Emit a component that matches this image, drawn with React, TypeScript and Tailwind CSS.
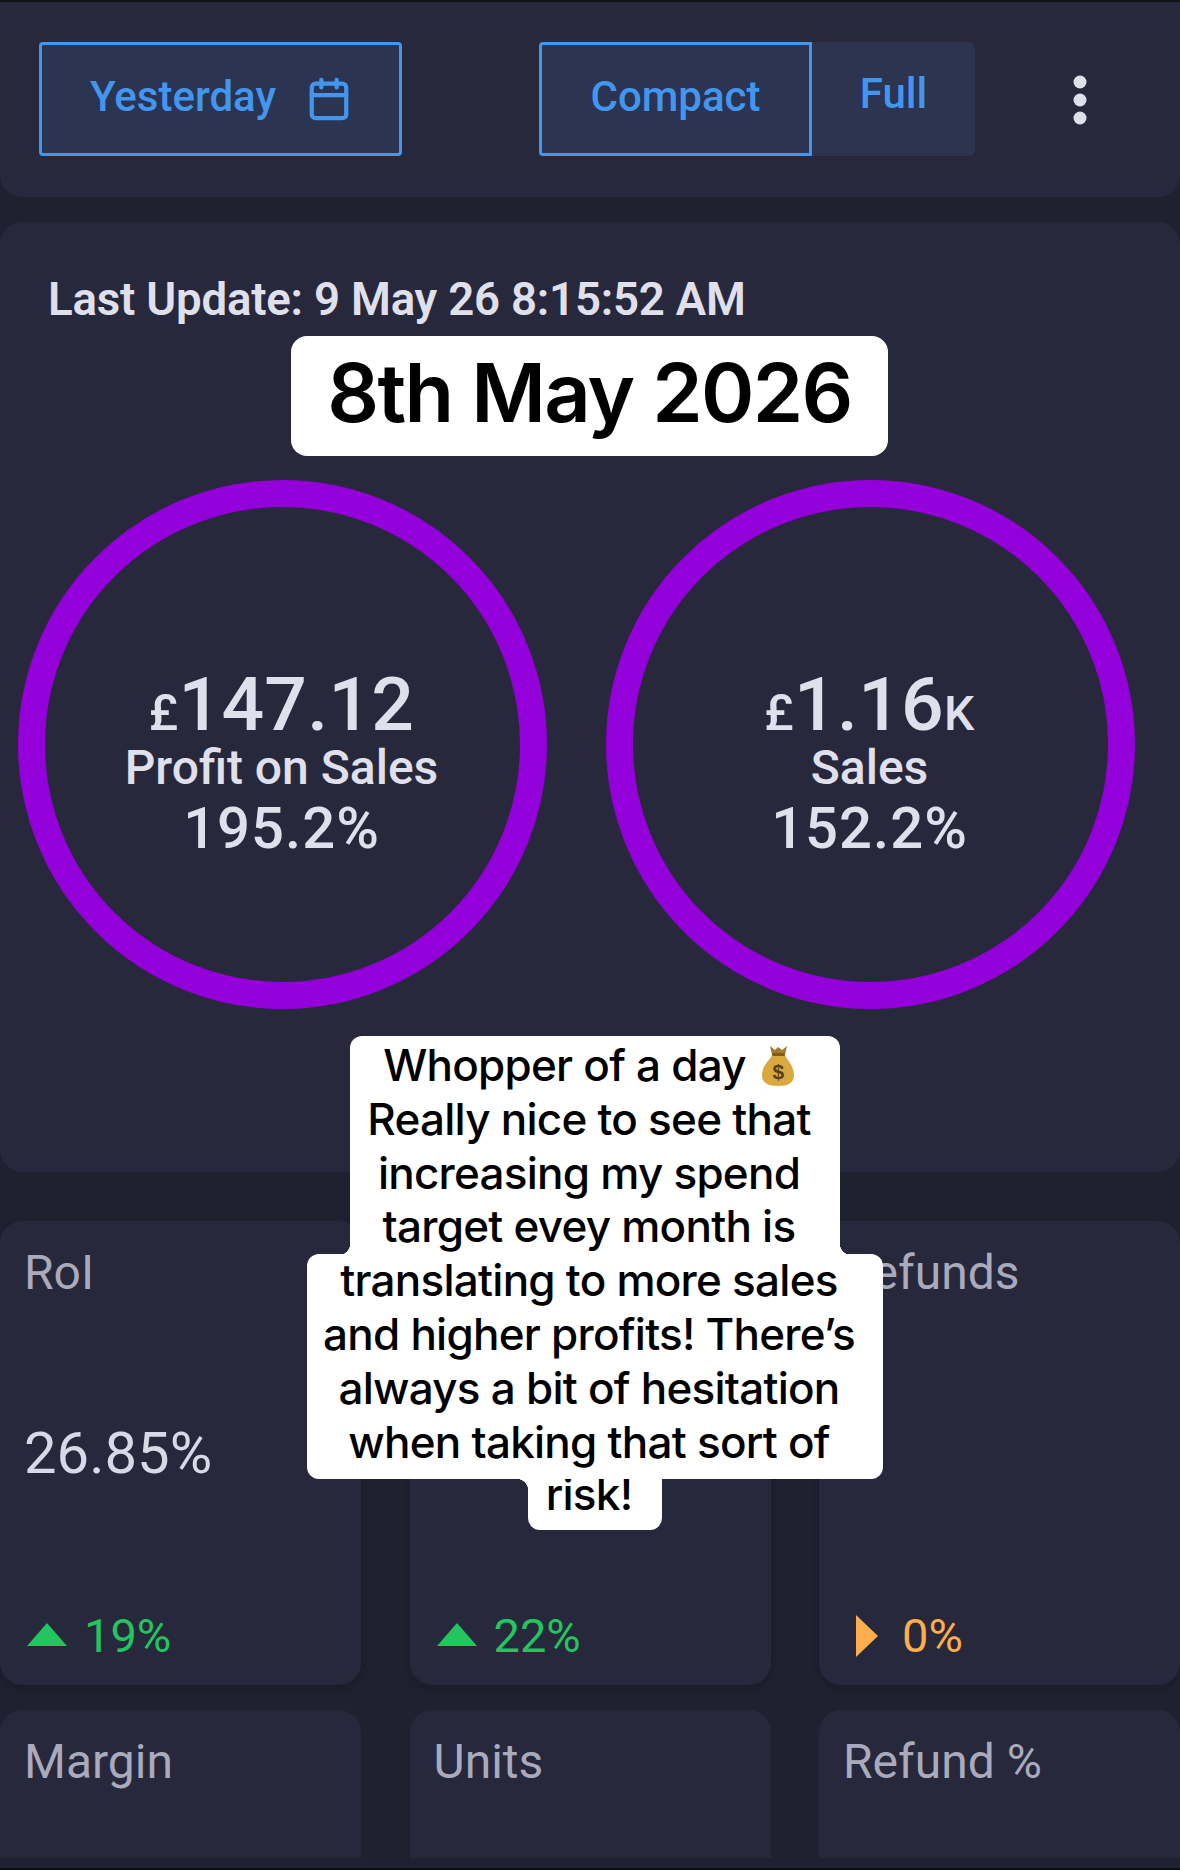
import { Calendar } from 'lucide-react';

const font = "font-['Roboto',sans-serif]";
const captionFont = "font-['Inter',sans-serif]";

function MoneyBag() {
  return (
    <svg width="34" height="42" viewBox="0 0 34 42" className="inline-block ml-[15px] align-[-6px]">
      <path d="M9 1 L14 5 L17 2 L21 5 L26 1 L24 10 L11 10 Z" fill="#a5792c" />
      <path d="M11 10 H24 C25 14 33 20 33 30 C33 38 27 41 17 41 C7 41 1 38 1 30 C1 20 10 14 11 10 Z" fill="#d9a83f" />
      <rect x="11" y="8" width="13" height="3" rx="1.5" fill="#7d5a1e" />
      <text x="17" y="34" textAnchor="middle" fontSize="21" fontWeight="700" fill="#54401a" fontFamily="Liberation Sans, sans-serif">$</text>
    </svg>
  );
}

function Ring({ currency, value, suffix, label, pct }: { currency: string; value: string; suffix?: string; label: string; pct: string }) {
  return (
    <div className="w-[529px] h-[529px] shrink-0 rounded-full border-[27px] border-[#9400d9] flex flex-col items-center justify-center text-[#e0e0ec] pt-[41px] pr-[2px]">
      <div className="flex items-baseline leading-none h-[70px] tracking-[0.3px]">
        <span className="text-[50px] font-medium">{currency}</span>
        <span className="text-[75px] font-medium">{value}</span>
        {suffix && <span className="text-[48px] font-medium">{suffix}</span>}
      </div>
      <div className="text-[48px] font-medium leading-[54px] mt-[4px] h-[52px]">{label}</div>
      <div className="text-[58px] font-medium leading-[70px] tracking-[1px]">{pct}</div>
    </div>
  );
}

function Stat({ label, value, delta, kind }: { label?: string; value?: string; delta: string; kind: 'up' | 'flat' }) {
  return (
    <div className="w-[361px] h-[464px] bg-[#27283c] rounded-[22px] pl-[24px] flex flex-col shadow-[0_4px_10px_rgba(0,0,0,0.12)]">
      <div className="text-[48px] leading-[54px] h-[54px] mt-[25px] text-[#a9abbd]">{label}</div>
      <div className="text-[58px] leading-[66px] mt-[120px] h-[66px] text-[#d8d9e6]">{value}</div>
      <div className="flex items-center mt-[123px]">
        {kind === 'up' ? (
          <svg width="40" height="24" viewBox="0 0 40 24" className="ml-[3px] mt-[-4px]">
            <path d="M20 1 L40 24 H0 Z" fill="#22c55e" />
          </svg>
        ) : (
          <svg width="22" height="42" viewBox="0 0 22 42" className="ml-[13px]">
            <path d="M0 0 L22 21 L0 42 Z" fill="#fbae4b" />
          </svg>
        )}
        <span className={`text-[47px] leading-[54px] ${kind === 'up' ? 'ml-[17px] text-[#22c55e]' : 'ml-[24px] text-[#fbae4b]'}`}>{delta}</span>
      </div>
    </div>
  );
}

function SmallCard({ label }: { label: string }) {
  return (
    <div className="w-[361px] h-[148px] bg-[#27283c] rounded-t-[22px] pl-[24px]">
      <div className="text-[48px] leading-[54px] mt-[25px] text-[#a9abbd]">{label}</div>
    </div>
  );
}

// inverted corners where the caption's line boxes meet
function Fillet({ className }: { className: string }) {
  return <div className={`absolute w-[12px] h-[12px] ${className}`} />;
}

export default function App() {
  return (
    <div className={`relative w-[1180px] h-[1870px] overflow-hidden bg-[#1f2030] ${font}`}>
      <div className="h-[2px] bg-[#11121c]" />

      <div className="h-[195px] bg-[#27283c] rounded-b-[22px] flex items-start pt-[40px] pl-[39px]">
        <button className="w-[363px] h-[114px] rounded-[4px] border-[3px] border-[#4396ee] bg-[#2b3450] flex items-center text-[#4396ee] text-[42px] font-medium pl-[48px] pb-[6px]">
          Yesterday
          <Calendar size={46} strokeWidth={2.2} className="ml-[30px] mt-[6px]" />
        </button>
        <div className="ml-[137px] flex h-[114px]">
          <button className="w-[273px] rounded-l-[4px] border-[3px] border-[#4396ee] bg-[#2b3450] flex items-center justify-center text-[#4396ee] text-[42px] font-medium pb-[6px]">
            Compact
          </button>
          <button className="w-[163px] rounded-r-[6px] bg-[#2c3450] flex justify-center pt-[27px] text-[#4396ee] text-[42px] font-medium leading-[50px]">
            Full
          </button>
        </div>
        <svg width="20" height="50" viewBox="0 0 20 50" className="ml-[95px] mt-[33px]">
          <circle cx="10" cy="7" r="6.5" fill="#e0e0ec" />
          <circle cx="10" cy="25" r="6.5" fill="#e0e0ec" />
          <circle cx="10" cy="43" r="6.5" fill="#e0e0ec" />
        </svg>
      </div>

      <div className="mt-[25px] h-[950px] bg-[#27283c] rounded-[22px] pt-[53px]">
        <div className="pl-[48px] text-[45.6px] font-semibold leading-[50px] text-[#e0e0ec] tracking-[-0.2px]">Last Update: 9 May 26 8:15:52 AM</div>
        <div className="flex gap-[59px] pl-[18px] mt-[155px]">
          <Ring currency="£" value="147.12" label="Profit on Sales" pct="195.2%" />
          <Ring currency="£" value="1.16" suffix="K" label="Sales" pct="152.2%" />
        </div>
      </div>

      <div className="mt-[49px] flex justify-between">
        <Stat label="RoI" value="26.85%" delta="19%" kind="up" />
        <Stat delta="22%" kind="up" />
        <Stat label="Refunds" delta="0%" kind="flat" />
      </div>
      <div className="mt-[25px] flex justify-between">
        <SmallCard label="Margin" />
        <SmallCard label="Units" />
        <SmallCard label="Refund %" />
      </div>

      <div className="absolute left-0 right-0 bottom-0 h-[2px] bg-[#0d0e15]" />

      {/* video text overlays */}
      <div className={`absolute left-[291px] top-[336px] w-[597px] h-[120px] bg-white rounded-[16px] flex items-center justify-center text-black text-[81px] font-semibold tracking-[-1.7px] pb-[4px] ${captionFont}`}>
        8th May 2026
      </div>

      <div className={`absolute left-[307px] top-[1036px] w-[576px] flex flex-col items-center text-black text-[44px] font-medium leading-[53.8px] tracking-[-0.75px] text-center ${captionFont}`}>
        <div className="relative w-[490px] bg-white rounded-t-[12px] pt-[3px] pb-[1px] pr-[12px]">
          <div>Whopper of a day<MoneyBag /></div>
          <div>Really nice to see that</div>
          <div>increasing my spend</div>
          <div>target evey month is</div>
          <Fillet className="left-[-12px] bottom-[0px] bg-[radial-gradient(circle_at_0_0,transparent_12px,white_12.5px)]" />
          <Fillet className="right-[-12px] bottom-[0px] bg-[radial-gradient(circle_at_100%_0,transparent_12px,white_12.5px)]" />
        </div>
        <div className="relative w-[576px] bg-white rounded-[12px] mt-[-1px] pb-[10px] pr-[12px]">
          <div>translating to more sales</div>
          <div>and higher profits! There’s</div>
          <div>always a bit of hesitation</div>
          <div>when taking that sort of</div>
          <Fillet className="left-[209px] bottom-[-12px] bg-[radial-gradient(circle_at_0_100%,transparent_12px,white_12.5px)]" />
          <Fillet className="right-[221px] bottom-[-12px] bg-[radial-gradient(circle_at_100%_100%,transparent_12px,white_12.5px)]" />
        </div>
        <div className="w-[134px] bg-white rounded-b-[12px] mt-[-11px] pb-[8px] pr-[12px]">
          <div>risk!</div>
        </div>
      </div>
    </div>
  );
}
